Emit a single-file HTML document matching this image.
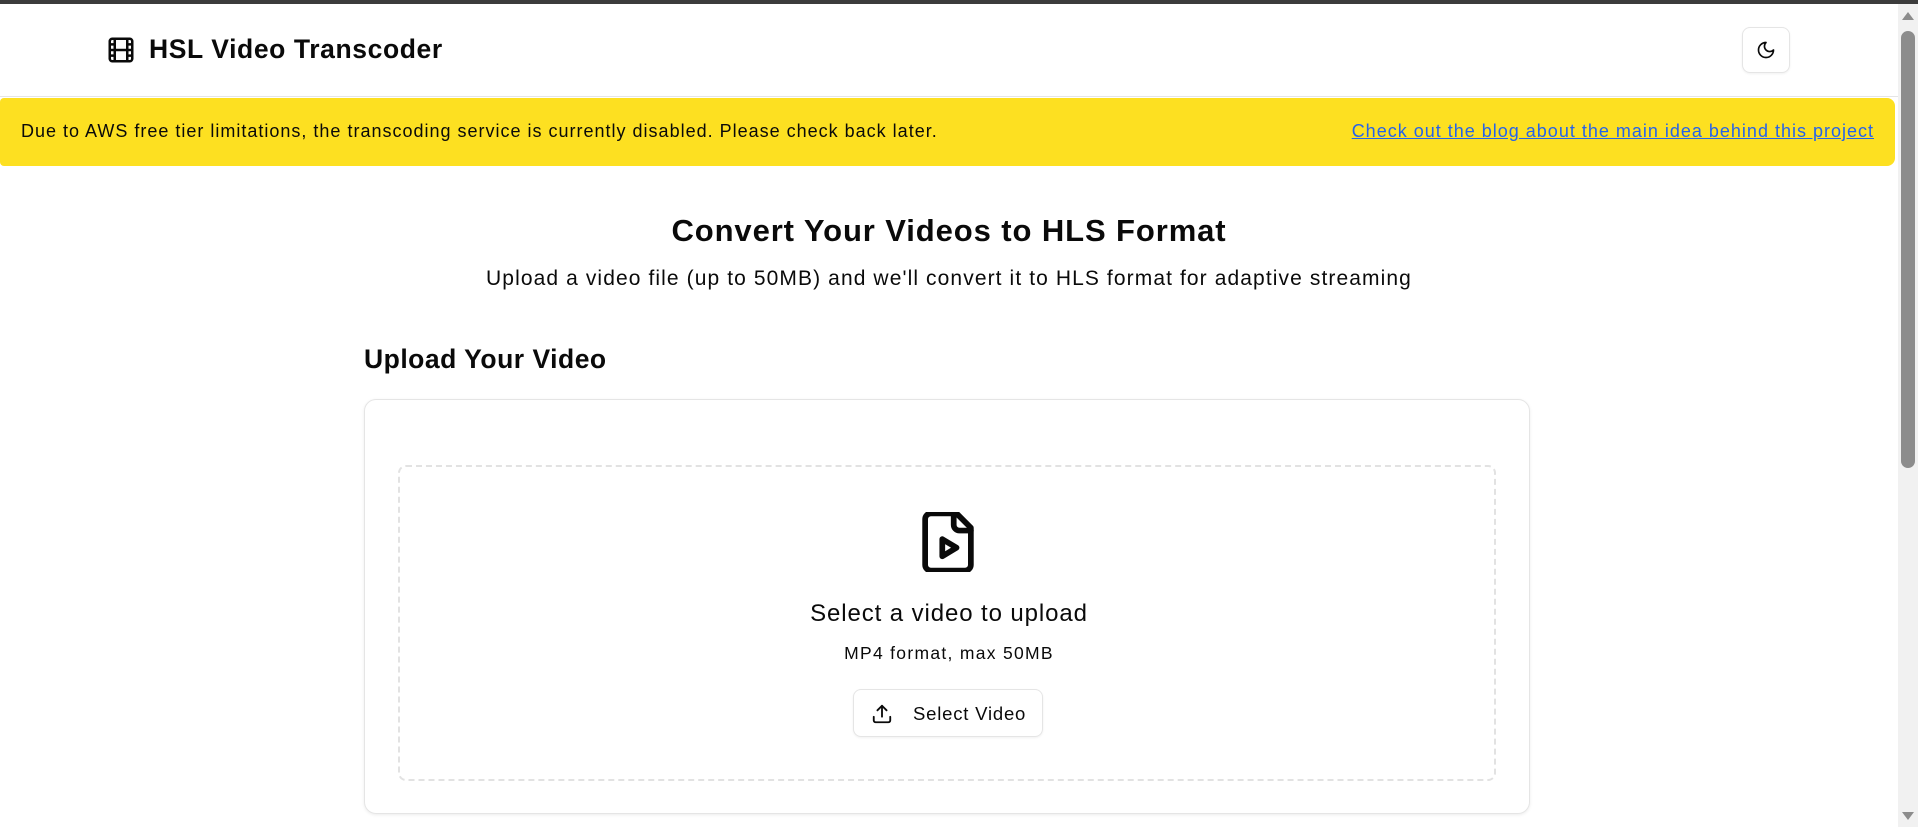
<!DOCTYPE html>
<html><head><meta charset="utf-8"><style>
*{box-sizing:border-box;margin:0;padding:0}
html,body{width:1918px;height:827px;overflow:hidden;background:#fff;font-family:"Liberation Sans",Arial,sans-serif;color:#0a0a0a}
.topbar{position:absolute;left:0;top:0;width:1918px;height:4px;background:#3c3c3c}
.sb{position:absolute;left:1898px;top:4px;width:20px;height:823px;background:#f1f1f1}
.thumb{position:absolute;left:1901px;top:31px;width:14px;height:437px;background:#8c8c8c;border-radius:7px}
.up{position:absolute;left:1902px;top:12px;width:0;height:0;border-left:6px solid transparent;border-right:6px solid transparent;border-bottom:8px solid #8c8c8c}
.dn{position:absolute;left:1902px;top:812px;width:0;height:0;border-left:6px solid transparent;border-right:6px solid transparent;border-top:8px solid #8c8c8c}
.hdr{position:absolute;left:0;top:4px;width:1898px;height:93px;border-bottom:1px solid #e5e5e5}
.logo{position:absolute;left:106px;top:35px}
.title{position:absolute;left:149px;top:33px;font-size:26.5px;letter-spacing:0.6px;font-weight:bold;line-height:32px}
.moon{position:absolute;left:1742px;top:27px;width:48px;height:46px;border:1px solid #e5e5e5;border-radius:8px;box-shadow:0 1px 2px rgba(0,0,0,.06);display:flex;align-items:center;justify-content:center}
.banner{position:absolute;left:0;top:98px;width:1895px;height:68px;background:#fde021;border-radius:4px 8px 8px 4px}
.btxt{position:absolute;left:21px;top:120px;font-size:18px;letter-spacing:1px;line-height:22px}
.link{position:absolute;right:44px;top:120px;font-size:18px;letter-spacing:1px;line-height:22px;color:#2563eb;text-decoration:underline}
h1{position:absolute;left:0;width:1898px;text-align:center;top:213px;font-size:31px;letter-spacing:0.9px;line-height:36px;font-weight:bold}
.sub{position:absolute;left:0;width:1898px;text-align:center;top:267px;font-size:21px;letter-spacing:1.1px;line-height:24px}
.h2{position:absolute;left:364px;top:344px;font-size:26.5px;letter-spacing:0.5px;font-weight:bold;line-height:30px}
.card{position:absolute;left:364px;top:399px;width:1166px;height:415px;border:1px solid #e5e5e5;border-radius:12px;box-shadow:0 1px 3px rgba(0,0,0,.08)}
.dash{position:absolute;left:398px;top:465px;width:1098px;height:316px;border:2px dashed #e2e2e2;border-radius:8px}
.fi{position:absolute;left:921px;top:512px}
.s1{position:absolute;left:0;width:1898px;text-align:center;top:600px;font-size:24px;letter-spacing:0.9px;line-height:28px}
.s2{position:absolute;left:0;width:1898px;text-align:center;top:643px;font-size:17.5px;letter-spacing:1.3px;line-height:20px}
.btn{position:absolute;left:853px;top:689px;width:190px;height:48px;border:1px solid #e5e5e5;border-radius:8px;box-shadow:0 1px 2px rgba(0,0,0,.06)}
.btn svg{position:absolute;left:17px;top:13px}
.btn span{position:absolute;left:59px;top:13px;font-size:18.5px;letter-spacing:0.8px;line-height:22px}
</style></head><body>
<div class="topbar"></div>
<div class="hdr"></div>
<svg class="logo" width="30" height="30" viewBox="0 0 24 24" fill="none" stroke="#0a0a0a" stroke-width="2" stroke-linecap="round" stroke-linejoin="round"><rect x="3" y="3" width="18" height="18" rx="2"/><path d="M7 3v18M17 3v18M3 7.5h4M3 12h18M3 16.5h4M17 7.5h4M17 16.5h4"/></svg>
<div class="title">HSL Video Transcoder</div>
<div class="moon"><svg width="20" height="20" viewBox="0 0 24 24" fill="none" stroke="#0a0a0a" stroke-width="2" stroke-linecap="round" stroke-linejoin="round"><path d="M12 3a6 6 0 0 0 9 9 9 9 0 1 1-9-9Z"/></svg></div>
<div class="banner"></div>
<div class="btxt">Due to AWS free tier limitations, the transcoding service is currently disabled. Please check back later.</div>
<div class="link">Check out the blog about the main idea behind this project</div>
<h1>Convert Your Videos to HLS Format</h1>
<div class="sub">Upload a video file (up to 50MB) and we'll convert it to HLS format for adaptive streaming</div>
<div class="h2">Upload Your Video</div>
<div class="card"></div>
<div class="dash"></div>
<svg class="fi" width="54" height="60" viewBox="3 1.5 18 21" fill="none" stroke="#0a0a0a" stroke-width="2" stroke-linecap="round" stroke-linejoin="round"><path d="M15 2H6a2 2 0 0 0-2 2v16a2 2 0 0 0 2 2h12a2 2 0 0 0 2-2V7Z"/><path d="M14 2v4a2 2 0 0 0 2 2h4"/><path d="m10 11 5 3-5 3v-6Z"/></svg>
<div class="s1">Select a video to upload</div>
<div class="s2">MP4 format, max 50MB</div>
<div class="btn"><svg width="22" height="22" viewBox="0 0 24 24" fill="none" stroke="#0a0a0a" stroke-width="2" stroke-linecap="round" stroke-linejoin="round"><path d="M21 15v4a2 2 0 0 1-2 2H5a2 2 0 0 1-2-2v-4"/><path d="M17 8l-5-5-5 5"/><path d="M12 3v12"/></svg><span>Select Video</span></div>
<div class="sb"></div><div class="thumb"></div><div class="up"></div><div class="dn"></div>
</body></html>
